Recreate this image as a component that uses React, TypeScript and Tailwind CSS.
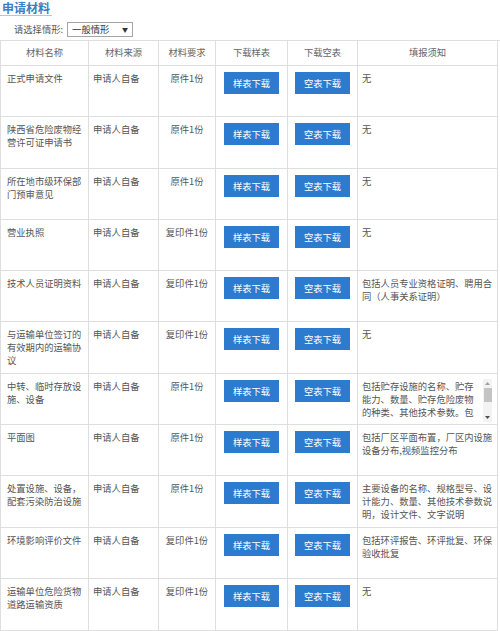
const font = { fontFamily: '"Noto Sans CJK SC", "Noto Sans", sans-serif' };

interface Row {
  name: string;
  source: string;
  req: string;
  note: string;
  h: string;
  scroll?: boolean;
}

const rows: Row[] = [
  { name: '正式申请文件', source: '申请人自备', req: '原件1份', note: '无', h: 'h-[51px]' },
  { name: '陕西省危险废物经营许可证申请书', source: '申请人自备', req: '原件1份', note: '无', h: 'h-[52px]' },
  { name: '所在地市级环保部门预审意见', source: '申请人自备', req: '原件1份', note: '无', h: 'h-[51px]' },
  { name: '营业执照', source: '申请人自备', req: '复印件1份', note: '无', h: 'h-[51px]' },
  { name: '技术人员证明资料', source: '申请人自备', req: '复印件1份', note: '包括人员专业资格证明、聘用合同（人事关系证明）', h: 'h-[51px]' },
  { name: '与运输单位签订的有效期内的运输协议', source: '申请人自备', req: '复印件1份', note: '无', h: 'h-[52px]' },
  {
    name: '中转、临时存放设施、设备',
    source: '申请人自备',
    req: '原件1份',
    note: '包括贮存设施的名称、贮存能力、数量、贮存危险废物的种类、其他技术参数。包',
    h: 'h-[51px]',
    scroll: true,
  },
  { name: '平面图', source: '申请人自备', req: '原件1份', note: '包括厂区平面布置，厂区内设施设备分布,视频监控分布', h: 'h-[51px]' },
  { name: '处置设施、设备，配套污染防治设施', source: '申请人自备', req: '原件1份', note: '主要设备的名称、规格型号、设计能力、数量、其他技术参数说明，设计文件、文字说明', h: 'h-[52px]' },
  { name: '环境影响评价文件', source: '申请人自备', req: '复印件1份', note: '包括环评报告、环评批复、环保验收批复', h: 'h-[51px]' },
  { name: '运输单位危险货物道路运输资质', source: '申请人自备', req: '复印件1份', note: '无', h: 'h-[52px]' },
];

const headers = ['材料名称', '材料来源', '材料要求', '下载样表', '下载空表', '填报须知'];

function DownloadButton({ label }: { label: string }) {
  return (
    <button
      type="button"
      className="mx-auto block h-[22px] w-[55px] bg-[#2d7bcf] text-[9.3px] leading-[22px] text-white"
    >
      {label}
    </button>
  );
}

function ScrollNote({ text }: { text: string }) {
  return (
    <div className="flex h-[43px]">
      <div className="h-[40px] w-[118px] overflow-hidden pt-[1px]">{text}</div>
      <div className="ml-[3px] flex w-[9px] flex-col items-center bg-[#f3f3f3]">
        <svg width="7" height="9" viewBox="0 0 7 9">
          <path d="M1 6 L3.5 3 L6 6 Z" fill="#a0a0a0" />
        </svg>
        <div className="h-[14px] w-[8px] bg-[#c4c4c4]" />
        <div className="flex-1" />
        <svg width="7" height="9" viewBox="0 0 7 9">
          <path d="M1 3 L3.5 6 L6 3 Z" fill="#505050" />
        </svg>
      </div>
    </div>
  );
}

export default function App() {
  return (
    <div className="w-[500px] bg-white text-[9.3px] text-[#555]" style={font}>
      {/* Title */}
      <div className="h-[17px]">
        <div className="inline-block border-b border-[#a9c9ea] px-[2px] text-[12px] font-bold leading-[15px] text-[#3a7ec3]">
          申请材料
        </div>
      </div>

      {/* Situation select */}
      <div className="flex h-[23px] items-center pl-[14px] pt-[2px]">
        <span className="text-[#555]">请选择情形:</span>
        <div className="ml-[4px] flex h-[15px] w-[66px] items-center justify-between border border-[#a5a5a5] px-[4px]">
          <span className="text-[#333]">一般情形</span>
          <span className="text-[6px] text-[#333]">▼</span>
        </div>
      </div>

      {/* Table */}
      <div className="grid grid-cols-[88px_70px_57px_72px_70px_140px] border-l border-t border-[#dedede]">
        {headers.map((h) => (
          <div
            key={h}
            className="flex h-[25px] items-center justify-center border-b border-r border-[#dedede] text-[#666]"
          >
            {h}
          </div>
        ))}
        {rows.map((r) => (
          <div key={r.name} className="contents">
            <div className={`${r.h} border-b border-r border-[#dedede] pl-[6px] pr-[4px] pt-[6px] leading-[13px]`}>
              {r.name}
            </div>
            <div className={`${r.h} border-b border-r border-[#dedede] pl-[4px] pt-[6px] leading-[13px]`}>
              {r.source}
            </div>
            <div className={`${r.h} border-b border-r border-[#dedede] pt-[6px] text-center leading-[13px]`}>
              {r.req}
            </div>
            <div className={`${r.h} border-b border-r border-[#dedede] pt-[6px]`}>
              <DownloadButton label="样表下载" />
            </div>
            <div className={`${r.h} border-b border-r border-[#dedede] pt-[6px]`}>
              <DownloadButton label="空表下载" />
            </div>
            <div
              className={`${r.h} overflow-hidden border-b border-r border-[#dedede] pl-[4px] pr-[3px] leading-[13px] ${
                r.scroll ? 'pt-[5px]' : 'pt-[6px]'
              }`}
            >
              {r.scroll ? <ScrollNote text={r.note} /> : r.note}
            </div>
          </div>
        ))}
      </div>
    </div>
  );
}
